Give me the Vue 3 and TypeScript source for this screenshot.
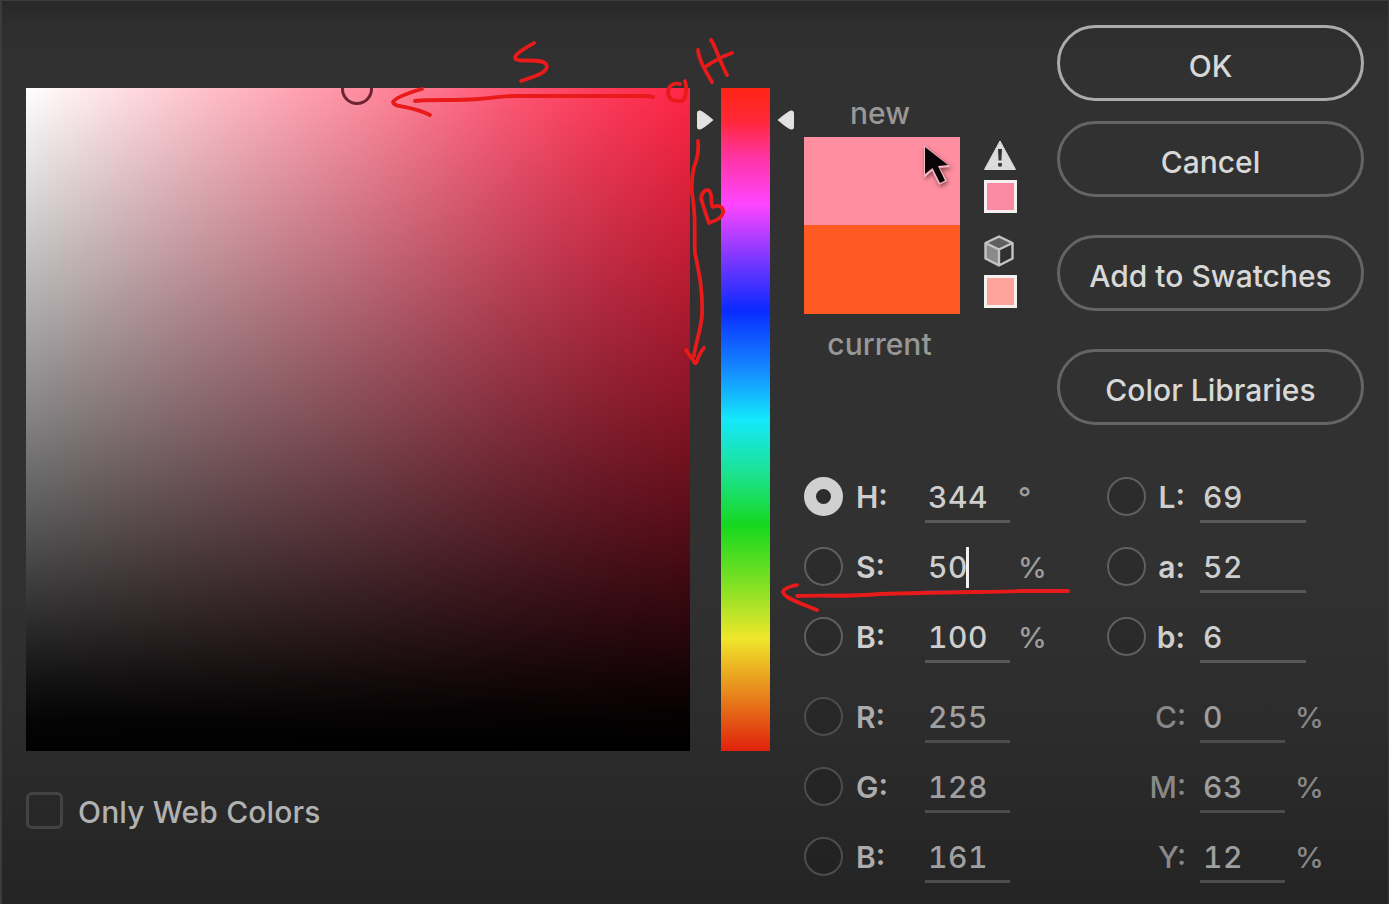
<script setup lang="ts">
interface Field {
  id: string
  label: string
  value: string
  unit?: string
  radio?: boolean
  checked?: boolean
  focused?: boolean
  wide?: boolean
  dim?: boolean
}

const buttons = [
  { label: 'OK', kind: 'primary' },
  { label: 'Cancel', kind: 'plain' },
  { label: 'Add to Swatches', kind: 'plain' },
  { label: 'Color Libraries', kind: 'plain' },
]

const groups: { name: string; fields: Field[] }[] = [
  {
    name: 'hsb',
    fields: [
      { id: 'h', label: 'H:', value: '344', unit: '°', radio: true, checked: true },
      { id: 's', label: 'S:', value: '50', unit: '%', radio: true, focused: true },
      { id: 'v', label: 'B:', value: '100', unit: '%', radio: true },
    ],
  },
  {
    name: 'lab',
    fields: [
      { id: 'l', label: 'L:', value: '69', radio: true, wide: true },
      { id: 'a', label: 'a:', value: '52', radio: true, wide: true },
      { id: 'b', label: 'b:', value: '6', radio: true, wide: true },
    ],
  },
  {
    name: 'rgb',
    fields: [
      { id: 'r', label: 'R:', value: '255', radio: true, dim: true },
      { id: 'g', label: 'G:', value: '128', radio: true, dim: true },
      { id: 'bl', label: 'B:', value: '161', radio: true, dim: true },
    ],
  },
  {
    name: 'cmyk',
    fields: [
      { id: 'c', label: 'C:', value: '0', unit: '%', dim: true },
      { id: 'm', label: 'M:', value: '63', unit: '%', dim: true },
      { id: 'y', label: 'Y:', value: '12', unit: '%', dim: true },
    ],
  },
]
</script>

<template>
  <main class="dialog">
    <section class="left">
      <div class="pickers">
        <div class="field-map"><span class="ring"></span></div>
        <div class="hue">
          <svg class="thumb thumb-l" viewBox="0 0 18 20"><path d="M1 3Q1 0 4 0.5Q7 1 17.500 10Q7 19 4 19.500Q1 20 1 17Z" /></svg>
          <svg class="thumb thumb-r" viewBox="0 0 18 20"><path d="M17 3Q17 0 14 0.5Q11 1 0.500 10Q11 19 14 19.500Q17 20 17 17Z" /></svg>
        </div>
      </div>
      <label class="web"><span class="box"></span><span class="web-text">Only Web Colors</span></label>
    </section>

    <section class="right">
      <div class="top">
        <div class="preview">
          <div class="caption new">new</div>
          <div class="swatch">
            <div class="sw-new"></div>
            <div class="sw-cur"></div>
            <svg class="cursor" viewBox="0 0 34 46">
              <path d="M4 2V35L12 28L19 42L27 38L20 25L31 24Z" fill="#f6b6c2" />
              <path d="M5 4V31L12.500 25L20 40L25 37.500L18 23L28 22Z" fill="#080506" />
            </svg>
          </div>
          <div class="caption current">current</div>
        </div>
        <div class="alerts">
          <svg class="warn" viewBox="0 0 34 30">
            <path d="M17 1L32.500 29.500H1.500Z" fill="#dcdcdc" stroke="#dcdcdc" stroke-linejoin="round" />
            <path d="M15 9H19L18.400 20.500H15.600ZM15.200 23H18.800V26.500H15.200Z" fill="#333" />
          </svg>
          <span class="chip chip-a"></span>
          <svg class="cube" viewBox="0 0 32 32">
            <path d="M16 1.500L29.500 8L16 14.500L2.500 8Z" fill="#606060" />
            <path d="M2.500 8L16 14.500V30L2.500 23.500Z" fill="#8a8a8a" />
            <path d="M29.500 8L16 14.500V30L29.500 23.500Z" fill="#303030" />
            <path d="M16 1.500L29.500 8V23.500L16 30.500L2.500 23.500V8ZM2.500 8L16 14.500L29.500 8M16 14.500V30" fill="none" stroke="#c4c4c4" stroke-width="2.400" stroke-linejoin="round" />
          </svg>
          <span class="chip chip-b"></span>
        </div>
        <div class="buttons">
          <button v-for="b in buttons" :key="b.label" type="button" :class="['btn', b.kind]">{{ b.label }}</button>
        </div>
      </div>

      <div class="fields">
        <div v-for="g in groups" :key="g.name" :class="['group', g.name]">
          <div v-for="f in g.fields" :key="f.id" :class="['row', { dim: f.dim }]">
            <span v-if="f.radio" :class="['radio', { checked: f.checked }]"></span>
            <span class="label">{{ f.label }}</span>
            <span :class="['value', { focused: f.focused, wide: f.wide }]">{{ f.value }}<i v-if="f.focused" class="caret"></i></span>
            <span v-if="f.unit" class="unit">{{ f.unit }}</span>
          </div>
        </div>
      </div>
    </section>

    <svg class="notes" viewBox="0 0 1389 904" fill="none">
      <path d="M534 43C526 48 517 52 515 57C514 64 541 57 546 64C551 72 533 77 521 81" />
      <path d="M422 89C410 92 395 98 393 102C394 108 410 105 430 115" />
      <path d="M415 101C430 99 455 101 478 99C495 98 500 96 516 96H646Q650 96 653 97" />
      <path d="M680 84C672 82 668 87 668 93C669 101 675 101 682 101C687 97 687 87 685 81" />
      <path d="M698 50C699 60 705 70 712 82M711 40C715 45 720 62 727 75M705 67C714 61 720 57 732 53" />
      <path d="M698 141C699 152 697 160 694 167C691 180 691 190 693 200C696 220 694 240 695 253C699 273 703 290 702 315C701 330 695 345 694 356" />
      <path d="M686 350L693 360Q695 366 697 361Q700 352 704 348" />
      <path d="M701 199C702 190 708 188 710 192C713 198 710 206 713 207C720 204 724 208 723 213C722 218 715 221 709 223C706 215 703 205 701 198" />
      <path d="M797 585Q783 588 783 592C784 598 800 603 817 610" />
      <path d="M797 596C820 595 850 597 880 594C940 592 1000 592 1020 591H1068" />
    </svg>
  </main>
</template>

<style>
body {
  margin: 0;
  background: #2e2e2e;
  overflow: hidden;
}
</style>

<style scoped>
.dialog {
  position: relative;
  box-sizing: border-box;
  width: 1389px;
  height: 904px;
  padding: 25px 25px 0 26px;
  display: flex;
  background: linear-gradient(#282828 0, #2e2e2e 25px, #313131 70px, #313131 560px, #2d2d2d 700px, #252525 880px, #242424 904px);
  box-shadow: inset 2px 1px 0 #3c3c3b, inset -1px 0 0 #393939;
  color: #cecece;
  font-family: Inter, "Liberation Sans", sans-serif;
  font-size: 30px;
  overflow: hidden;
}
.left {
  width: 744px;
  margin-right: 34px;
  padding-top: 63px;
}
.pickers {
  display: flex;
  gap: 31px;
}
.field-map {
  position: relative;
  width: 664px;
  height: 663px;
  overflow: hidden;
  background:
    linear-gradient(to bottom, rgba(0, 0, 0, 0), rgba(0, 0, 0, 0.24) 25%, rgba(0, 0, 0, 0.49) 50%, rgba(0, 0, 0, 0.65) 65%, rgba(0, 0, 0, 0.82) 80%, rgba(0, 0, 0, 0.92) 89%, rgba(0, 0, 0, 0.98) 95%, #000),
    linear-gradient(to right, #fff, #ffc0ca 27%, #ff8ca0 51%, #ff5774 73%, #ff3a5a 87%, #ff2545);
}
.ring {
  position: absolute;
  left: 315px;
  top: -15px;
  width: 26px;
  height: 26px;
  border: 3px solid #6c2435;
  border-radius: 50%;
}
.hue {
  position: relative;
  width: 49px;
  height: 663px;
  background: linear-gradient(#ff2414 0, #ff2838 5%, #ff34a4 10.500%, #ff45ff 17.500%, #8038ff 25.500%, #0a2aff 33.500%, #148aff 42.500%, #14e8fc 50%, #1ce292 58%, #16d81e 66%, #7ce024 74.500%, #efe72a 83%, #e8841c 91.500%, #e0210d 100%);
}
.thumb {
  position: absolute;
  top: 22px;
  width: 18px;
  height: 20px;
  fill: #e2e2e2;
}
.thumb-l { left: -25px; }
.thumb-r { left: 56px; }
.web {
  display: flex;
  align-items: center;
  gap: 15px;
  margin-top: 41px;
}
.box {
  box-sizing: border-box;
  width: 37px;
  height: 37px;
  border: 3px solid #434343;
  border-radius: 6px;
}
.web-text {
  color: #b2b2b2;
  padding-top: 3px;
  line-height: 34px;
  font-weight: 500;
  letter-spacing: 0.15px;
  white-space: nowrap;
}
.right {
  width: 560px;
}
.top {
  display: flex;
}
.preview {
  width: 156px;
  padding-top: 67px;
}
.caption {
  color: #979797;
  text-align: center;
  line-height: 40px;
  font-weight: 500;
}
.new {
  height: 44px;
  margin-right: 4px;
  padding-top: 1px;
}
.current {
  margin-right: 5px;
  padding-top: 10px;
}
.swatch {
  position: relative;
  height: 177px;
}
.sw-new {
  height: 88px;
  background: #ff8fa0;
}
.sw-cur {
  height: 89px;
  background: #ff5a22;
}
.cursor {
  position: absolute;
  left: 116px;
  top: 6px;
  width: 34px;
  height: 46px;
  filter: drop-shadow(1px 2px 2px rgba(60, 20, 30, 0.6));
}
.alerts {
  width: 33px;
  margin-left: 24px;
  padding-top: 115px;
  display: flex;
  flex-direction: column;
  align-items: center;
}
.warn {
  width: 34px;
  height: 30px;
  margin: 0 2px 10px 0;
}
.chip {
  box-sizing: border-box;
  width: 33px;
  height: 33px;
  border: 3px solid #f6f1f1;
}
.chip-a { background: #fa89a2; }
.chip-b { background: #ffa39d; }
.cube {
  width: 32px;
  height: 32px;
  margin: 22px 3px 8px 0;
}
.buttons {
  width: 307px;
  margin-left: 40px;
  display: flex;
  flex-direction: column;
}
.btn {
  box-sizing: border-box;
  height: 76px;
  margin: 0 0 38px;
  padding: 5px 0 0;
  border: 3px solid #646464;
  border-radius: 38px;
  background: transparent;
  color: #d8d8d8;
  font: inherit;
  font-weight: 500;
  white-space: nowrap;
}
.primary {
  margin-bottom: 20px;
  border-color: #ababab;
}
.btn:last-child { margin-bottom: 0; }
.fields {
  display: grid;
  grid-template-columns: 303px 257px;
  row-gap: 10px;
  margin-top: 36px;
}
.row {
  height: 70px;
  display: flex;
  align-items: center;
}
.radio {
  box-sizing: border-box;
  width: 39px;
  height: 39px;
  border: 2px solid #5f5f5f;
  border-radius: 50%;
  background: rgba(0, 0, 0, 0.1);
}
.radio.checked { border: 12px solid #d0d0d0; }
.label {
  width: 69px;
  margin-left: 13px;
  font-weight: 600;
  padding-top: 2px;
}
.lab .label, .cmyk .label {
  width: 39px;
  margin-left: 0;
  text-align: right;
}
.lab .label { margin-right: 15px; }
.cmyk .label {
  width: 79px;
  margin-right: 14px;
  font-weight: 500;
}
.value {
  box-sizing: border-box;
  align-self: flex-start;
  width: 85px;
  height: 54px;
  margin-top: 8px;
  padding: 2px 0 0 3px;
  border-bottom: 3px solid #585858;
  line-height: 52px;
  font-weight: 500;
  letter-spacing: 0.5px;
  font-variant-numeric: tabular-nums;
  white-space: nowrap;
}
.wide { width: 106px; }
.focused { border-color: #24406f; }
.caret {
  display: inline-block;
  width: 3px;
  height: 41px;
  margin-left: -2px;
  background: #f0f0f0;
  vertical-align: -10px;
}
.unit {
  margin-left: 8px;
  padding-top: 2px;
  color: #9c9c9c;
  font-size: 29px;
  font-weight: 500;
}
.cmyk .unit { margin-left: 10px; }
.dim { color: #9f9f9f; }
.dim .label { color: #acacac; }
.dim .value { border-color: #4c4c4c; }
.dim .radio { border-color: #4d4d4d; }
.cmyk .dim .label, .cmyk .dim .unit { color: #888; }
.notes {
  position: absolute;
  left: 0;
  top: 0;
  width: 1389px;
  height: 904px;
  stroke: #e81a1a;
  stroke-width: 3.800;
  stroke-linecap: round;
  stroke-linejoin: round;
  pointer-events: none;
}
</style>
